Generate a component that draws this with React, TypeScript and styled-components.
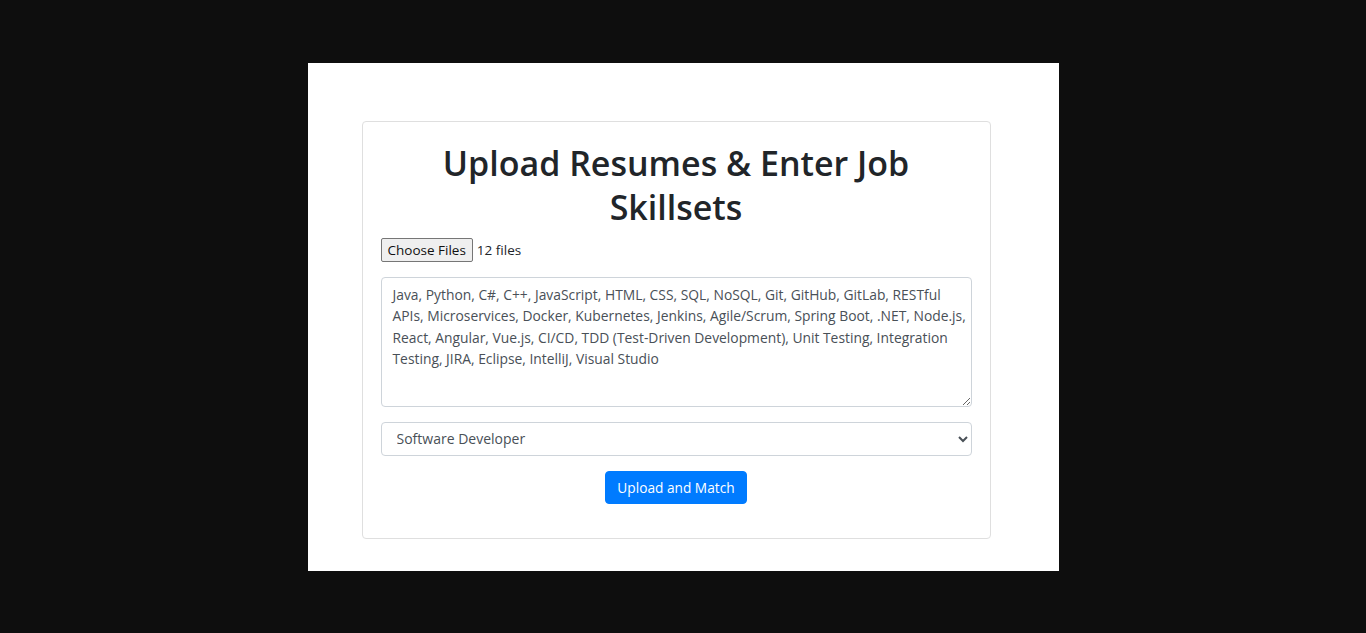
import styled, { createGlobalStyle } from "styled-components";

const skills =
  "Java, Python, C#, C++, JavaScript, HTML, CSS, SQL, NoSQL, Git, GitHub, GitLab, RESTful APIs, Microservices, Docker, Kubernetes, Jenkins, Agile/Scrum, Spring Boot, .NET, Node.js, React, Angular, Vue.js, CI/CD, TDD (Test-Driven Development), Unit Testing, Integration Testing, JIRA, Eclipse, IntelliJ, Visual Studio";

const roles = ["Software Developer", "Data Scientist", "Product Manager"];

const GlobalStyle = createGlobalStyle`
  html, body {
    margin: 0;
    padding: 0;
    background: #0e0e0e;
    font-family: "Segoe UI", "Open Sans", "Noto Sans", sans-serif;
  }
  * { box-sizing: border-box; }
`;

const Screen = styled.div`
  width: 100vw;
  height: 100vh;
  display: flex;
  align-items: center;
  justify-content: center;
`;

const Panel = styled.div`
  width: 751px;
  height: 508px;
  background: #fff;
  padding: 58px 68px 0 54px;
`;

const Card = styled.div`
  border: 1px solid #dfdfdf;
  border-radius: 4px;
  padding: 19px 18px 20px;
  display: flex;
  flex-direction: column;
`;

const Title = styled.h2`
  margin: 0 0 9px;
  text-align: center;
  font-size: 34px;
  font-weight: 600;
  line-height: 44px;
  color: #212529;
`;

const FileRow = styled.div`
  display: flex;
  align-items: center;
  gap: 4px;
  height: 24px;
  margin-bottom: 15px;
`;

const FileButton = styled.button`
  height: 24px;
  padding: 0 6px;
  font-family: inherit;
  font-size: 13.5px;
  color: #111;
  background: #efefef;
  border: 1px solid #767676;
  border-radius: 2px;
`;

const FileCount = styled.span`
  font-size: 13.5px;
  color: #212529;
`;

const SkillsBox = styled.textarea`
  height: 130px;
  padding: 6px 2px 6px 11px;
  font-family: inherit;
  font-size: 13.85px;
  line-height: 21.6px;
  color: #495057;
  border: 1px solid #ced4da;
  border-radius: 4px;
  resize: vertical;
  margin-bottom: 15px;
  outline: none;
`;

const RoleSelect = styled.select`
  height: 34px;
  padding: 0 12px 0 11px;
  font-family: inherit;
  font-size: 14px;
  color: #495057;
  background: #fff;
  border: 1px solid #ced4da;
  border-radius: 4px;
  margin-bottom: 15px;
  outline: none;
`;

const SubmitButton = styled.button`
  align-self: center;
  height: 33px;
  padding: 0 11px;
  font-family: inherit;
  font-size: 13.7px;
  color: #fff;
  background: #007bff;
  border: 1px solid #007bff;
  border-radius: 4px;
  margin-bottom: 14px;
`;

export default function App() {
  return (
    <>
      <GlobalStyle />
      <Screen>
        <Panel>
          <Card>
            <Title>
              Upload Resumes &amp; Enter Job
              <br />
              Skillsets
            </Title>
            <FileRow>
              <FileButton type="button">Choose Files</FileButton>
              <FileCount>12 files</FileCount>
            </FileRow>
            <SkillsBox defaultValue={skills} />
            <RoleSelect defaultValue={roles[0]}>
              {roles.map((r) => (
                <option key={r}>{r}</option>
              ))}
            </RoleSelect>
            <SubmitButton type="button">Upload and Match</SubmitButton>
          </Card>
        </Panel>
      </Screen>
    </>
  );
}
